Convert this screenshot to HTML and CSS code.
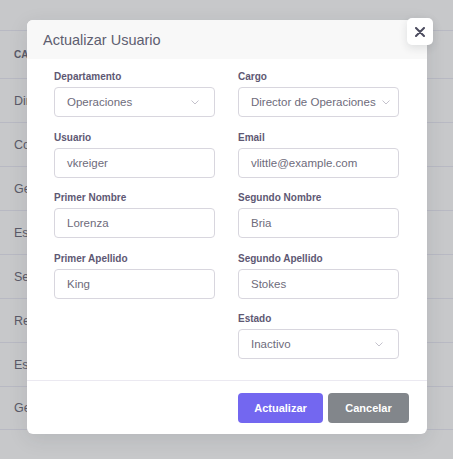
FILE: index.html
```html
<!DOCTYPE html>
<html lang="es">
<head>
<meta charset="utf-8">
<title>Actualizar Usuario</title>
<link rel="stylesheet" href="styles.css">
</head>
<body>
<div class="page">
  <div class="row row-head"><span>CARGO</span></div>
  <div class="row"><span>Director</span></div>
  <div class="row"><span>Coordinador</span></div>
  <div class="row"><span>Gerente</span></div>
  <div class="row"><span>Especialista</span></div>
  <div class="row"><span>Secretario</span></div>
  <div class="row"><span>Recepcionista</span></div>
  <div class="row"><span>Especialista</span></div>
  <div class="row"><span>Gerente</span></div>
</div>

<div class="modal">
  <div class="modal-header">
    <h5 class="modal-title">Actualizar Usuario</h5>
  </div>
  <button class="close-btn" type="button" aria-label="Cerrar">
    <svg width="10" height="10" viewBox="0 0 10 10"><path d="M1 1L9 9M9 1L1 9" stroke="#4b4b5e" stroke-width="2" stroke-linecap="round"/></svg>
  </button>
  <div class="modal-body">
    <div class="field">
      <label class="label">Departamento</label>
      <div class="control select"><span>Operaciones</span><svg class="chev" width="8" height="5" viewBox="0 0 8 5"><path d="M0.5 0.5L4 4L7.5 0.5" fill="none" stroke="#c4c2cc" stroke-width="1"/></svg></div>
    </div>
    <div class="field">
      <label class="label">Cargo</label>
      <div class="control select"><span>Director de Operaciones</span><svg class="chev" width="8" height="5" viewBox="0 0 8 5"><path d="M0.5 0.5L4 4L7.5 0.5" fill="none" stroke="#c4c2cc" stroke-width="1"/></svg></div>
    </div>
    <div class="field">
      <label class="label">Usuario</label>
      <div class="control"><span>vkreiger</span></div>
    </div>
    <div class="field">
      <label class="label">Email</label>
      <div class="control"><span>vlittle@example.com</span></div>
    </div>
    <div class="field">
      <label class="label">Primer Nombre</label>
      <div class="control"><span>Lorenza</span></div>
    </div>
    <div class="field">
      <label class="label">Segundo Nombre</label>
      <div class="control"><span>Bria</span></div>
    </div>
    <div class="field">
      <label class="label">Primer Apellido</label>
      <div class="control"><span>King</span></div>
    </div>
    <div class="field">
      <label class="label">Segundo Apellido</label>
      <div class="control"><span>Stokes</span></div>
    </div>
    <div class="field empty"></div>
    <div class="field">
      <label class="label">Estado</label>
      <div class="control select"><span>Inactivo</span><svg class="chev" width="8" height="5" viewBox="0 0 8 5"><path d="M0.5 0.5L4 4L7.5 0.5" fill="none" stroke="#c4c2cc" stroke-width="1"/></svg></div>
    </div>
  </div>
  <div class="modal-footer">
    <button class="btn btn-primary" type="button">Actualizar</button>
    <button class="btn btn-secondary" type="button">Cancelar</button>
  </div>
</div>
</body>
</html>
```

FILE: styles.css
```css
* { box-sizing: border-box; }
html, body { margin: 0; padding: 0; }
body {
  width: 453px;
  height: 459px;
  overflow: hidden;
  background: #c7c8ca;
  font-family: "Liberation Sans", Arial, sans-serif;
  position: relative;
}
.page {
  padding-top: 30px;
}
.row {
  height: 44px;
  border-top: 1px solid #b8b9c3;
  display: flex;
  align-items: center;
  padding-left: 14px;
  font-size: 12.5px;
  color: #5a5a68;
}
.row-head {
  height: 48px;
  font-size: 10px;
  font-weight: bold;
}
.row:last-child { border-bottom: 1px solid #b8b9c3; }

.modal {
  position: absolute;
  left: 27px;
  top: 20px;
  width: 400px;
  background: #fff;
  border-radius: 6px;
  box-shadow: 0 5px 20px rgba(34, 41, 47, 0.1);
}
.modal-header {
  height: 39px;
  background: #f8f8f8;
  border-radius: 6px 6px 0 0;
  display: flex;
  align-items: center;
  padding-left: 16px;
}
.modal-title {
  margin: 0;
  font-size: 14.5px;
  font-weight: normal;
  color: #5e5e70;
}
.close-btn {
  position: absolute;
  left: 380px;
  top: -2px;
  width: 26px;
  height: 27px;
  border: none;
  border-radius: 5px;
  background: #fff;
  box-shadow: 0 3px 8px rgba(34, 41, 47, 0.12);
  display: flex;
  align-items: center;
  justify-content: center;
  padding: 0;
}
.modal-body {
  display: grid;
  grid-template-columns: 161px 161px;
  column-gap: 23px;
  row-gap: 13.5px;
  padding: 11px 27px 21px;
}
.field {
  display: flex;
  flex-direction: column;
}
.label {
  font-size: 10px;
  line-height: 13px;
  font-weight: bold;
  color: #5e5873;
  margin-bottom: 4px;
}
.control {
  height: 30px;
  border: 1px solid #d8d6de;
  border-radius: 4px;
  display: flex;
  align-items: center;
  justify-content: space-between;
  padding: 0 15px 0 12px;
  font-size: 11.5px;
  color: #6e6b7b;
  white-space: nowrap;
  overflow: hidden;
}
.chev { flex: none; margin-left: 6px; }
.modal-footer {
  border-top: 1px solid #ebe9f1;
  display: flex;
  justify-content: flex-end;
  gap: 5px;
  padding: 12px 18px 11px;
}
.btn {
  height: 30px;
  border: none;
  border-radius: 4px;
  font-family: "Liberation Sans", Arial, sans-serif;
  font-size: 11px;
  font-weight: bold;
  color: #fff;
  padding: 0;
}
.btn-primary { background: #7367f0; width: 85px; }
.btn-secondary { background: #82868b; width: 81px; }
```
